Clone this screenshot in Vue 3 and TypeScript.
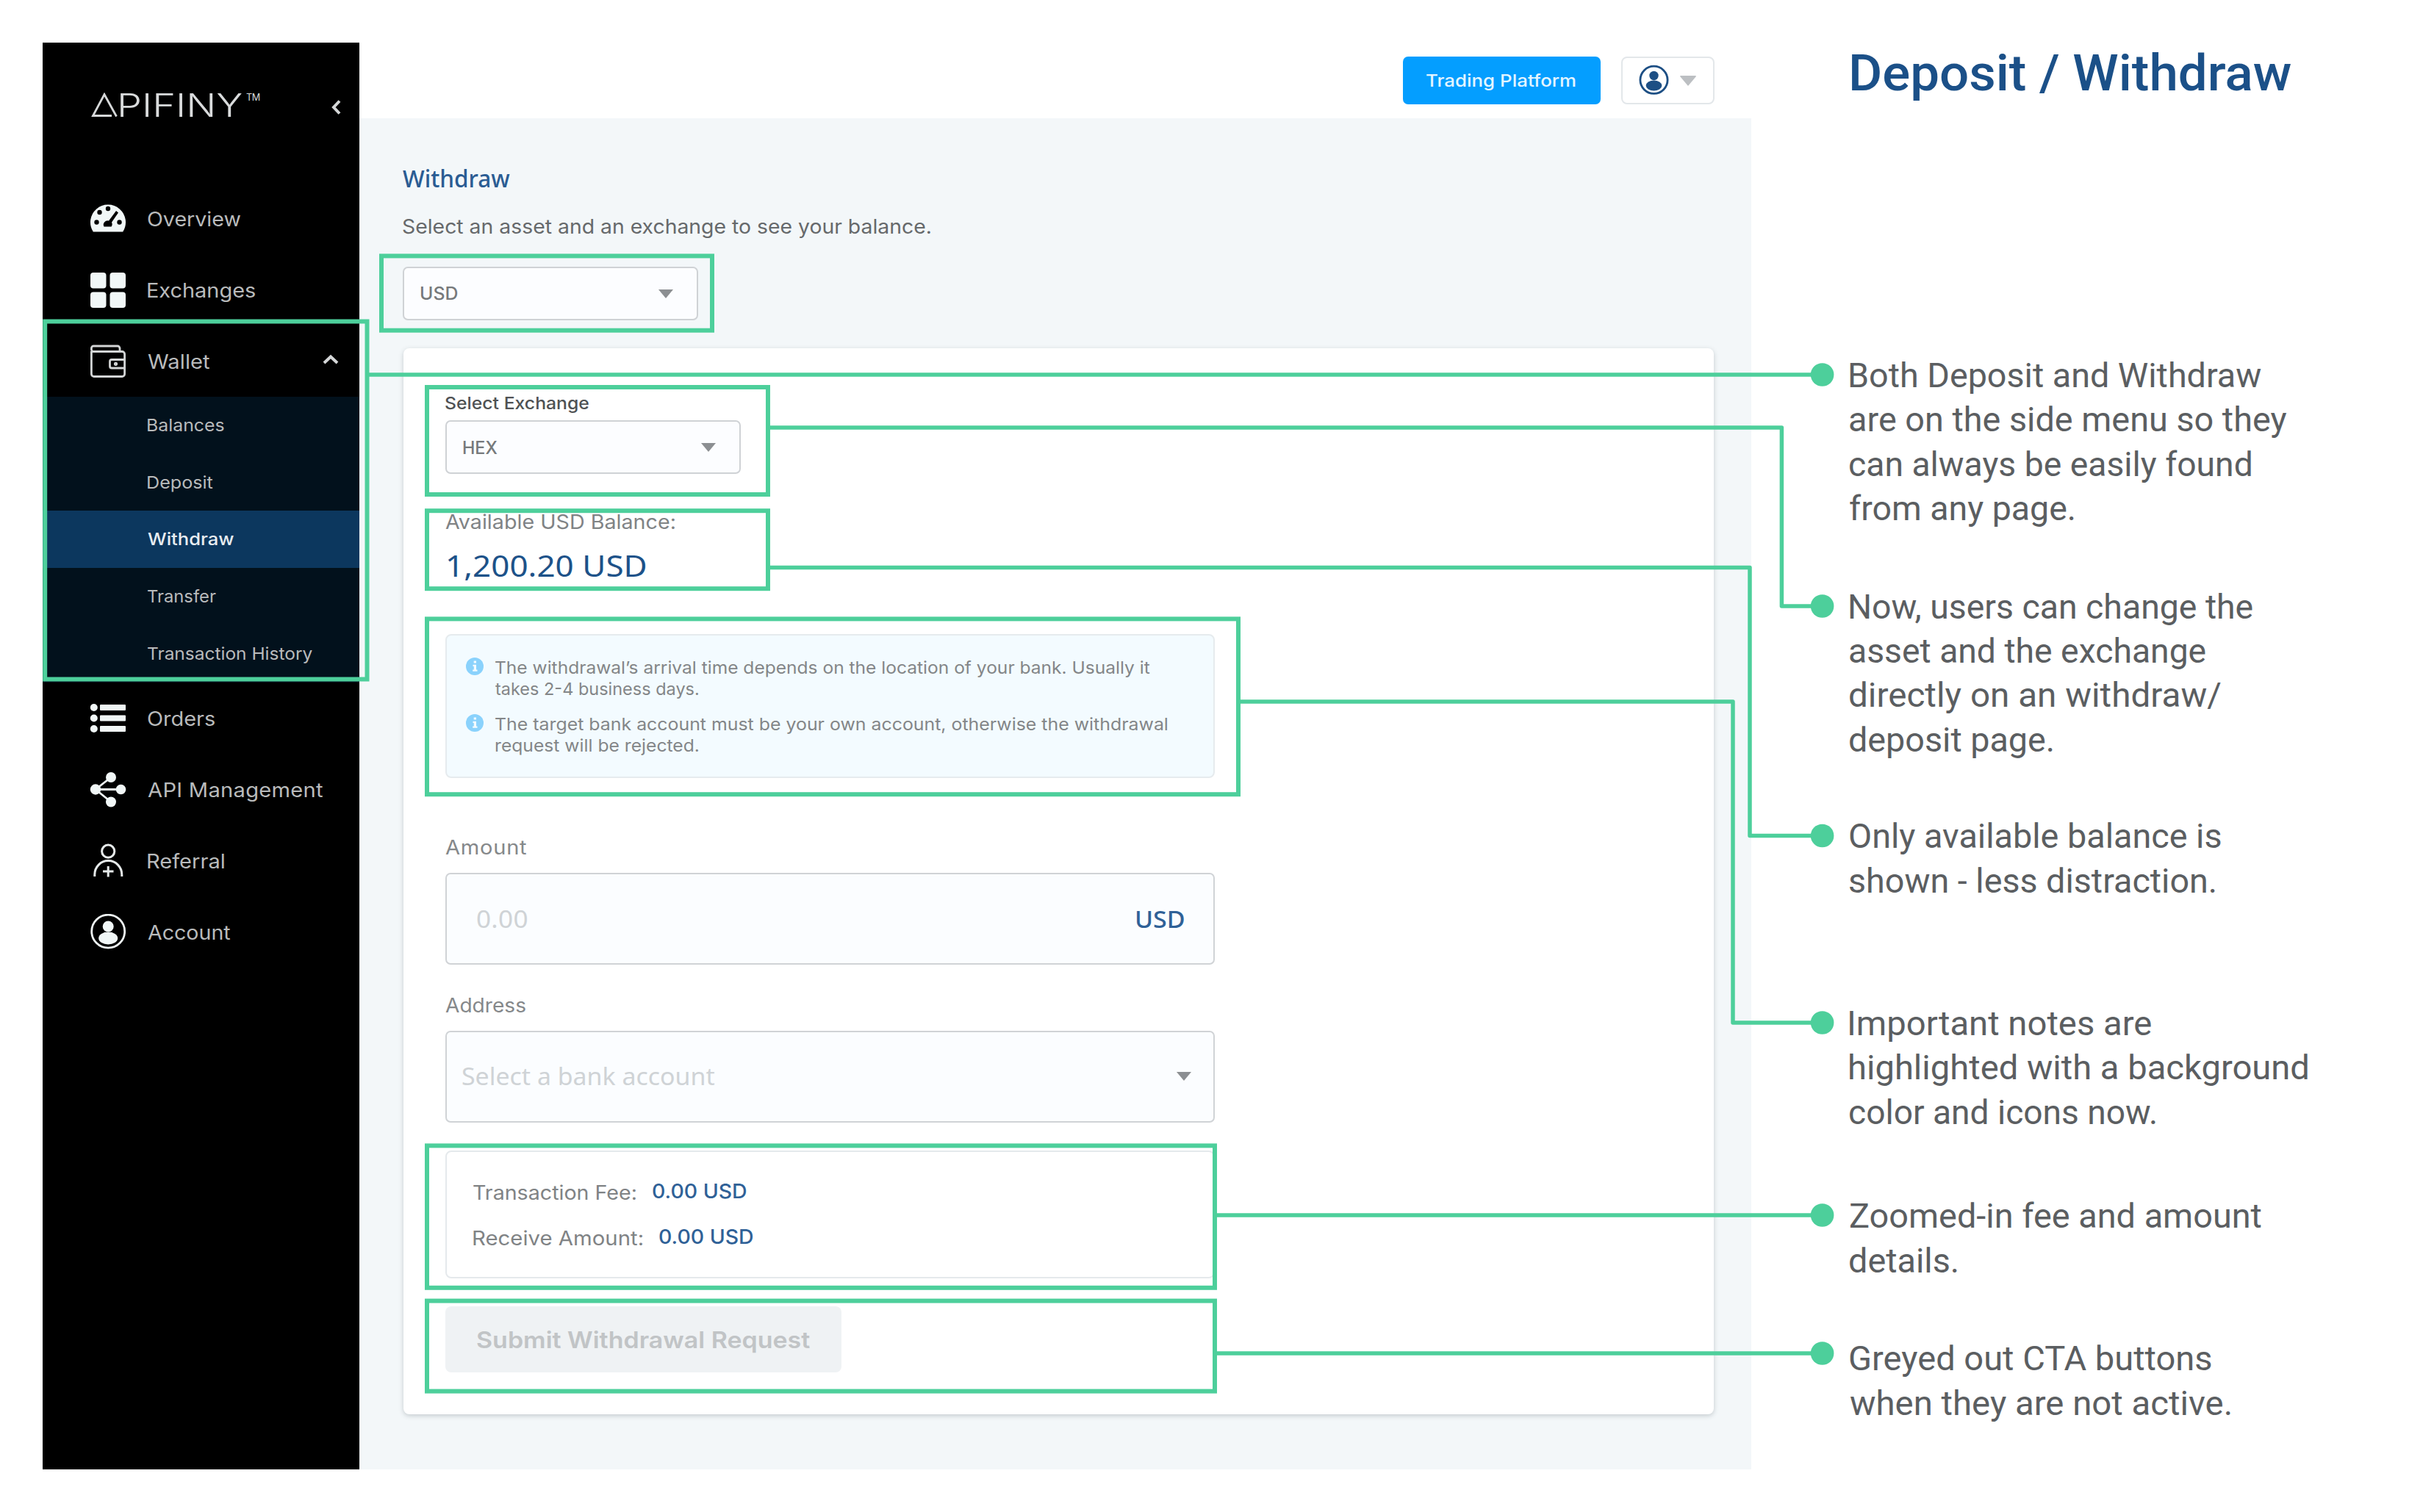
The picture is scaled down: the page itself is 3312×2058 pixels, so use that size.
<script setup lang="ts">
interface NavItem { icon: string; label: string; width: number }
interface SubItem { label: string; width: number; active?: boolean }
interface Line { text: string; width: number }
interface Note { id: string; lines: Line[] }

const topNav: NavItem[] = [
  { icon: 'gauge', label: 'Overview', width: 126 },
  { icon: 'grid', label: 'Exchanges', width: 146 },
  { icon: 'wallet', label: 'Wallet', width: 85 },
]
const walletNav: SubItem[] = [
  { label: 'Balances', width: 104 },
  { label: 'Deposit', width: 89 },
  { label: 'Withdraw', width: 117, active: true },
  { label: 'Transfer', width: 93 },
  { label: 'Transaction History', width: 224 },
]
const bottomNav: NavItem[] = [
  { icon: 'list', label: 'Orders', width: 91 },
  { icon: 'share', label: 'API Management', width: 239 },
  { icon: 'referral', label: 'Referral', width: 104 },
  { icon: 'account', label: 'Account', width: 113 },
]
const tips: Line[][] = [
  [
    { text: 'The withdrawal’s arrival time depends on the location of your bank. Usually it', width: 891 },
    { text: 'takes 2-4 business days.', width: 276 },
  ],
  [
    { text: 'The target bank account must be your own account, otherwise the withdrawal', width: 914 },
    { text: 'request will be rejected.', width: 276 },
  ],
]
const fees = [
  { label: 'Transaction Fee:', width: 221, value: '0.00 USD' },
  { label: 'Receive Amount:', width: 230, value: '0.00 USD' },
]
const notes: Note[] = [
  { id: 'menu', lines: [
    { text: 'Both Deposit and Withdraw', width: 560 },
    { text: 'are on the side menu so they', width: 594 },
    { text: 'can always be easily found', width: 546 },
    { text: 'from any page.', width: 305 },
  ] },
  { id: 'exchange', lines: [
    { text: 'Now, users can change the', width: 548 },
    { text: 'asset and the exchange', width: 484 },
    { text: 'directly on an withdraw/', width: 505 },
    { text: 'deposit page.', width: 276 },
  ] },
  { id: 'balance', lines: [
    { text: 'Only available balance is', width: 505 },
    { text: 'shown - less distraction.', width: 497 },
  ] },
  { id: 'important', lines: [
    { text: 'Important notes are', width: 410 },
    { text: 'highlighted with a background', width: 623 },
    { text: 'color and icons now.', width: 416 },
  ] },
  { id: 'fees', lines: [
    { text: 'Zoomed-in fee and amount', width: 560 },
    { text: 'details.', width: 146 },
  ] },
  { id: 'cta', lines: [
    { text: 'Greyed out CTA buttons', width: 492 },
    { text: 'when they are not active.', width: 518 },
  ] },
]

// Highlight frames: x, y, width, height of the stroke's centre line.
const frames = [
  [61.2, 437.5, 438.3, 487],
  [519, 348.4, 450, 101.3],
  [581, 527, 464, 146],
  [581, 695.2, 464, 106],
  [581, 842.4, 1104, 238.8],
  [581, 1559.4, 1072, 193.4],
  [581, 1770.6, 1072, 123],
]
const connectors = [
  'M502 510H2480',
  'M1047 582H2424.4V825H2480',
  'M1047 772.5H2381V1137.5H2480',
  'M1687 955H2358V1392H2480',
  'M1655 1654H2480',
  'M1655 1842H2480',
]
const dots = [510, 825, 1137.5, 1392, 1654, 1842]

// Widens a label so that its ink spans the given width from its box's left edge:
// the glyphs are stretched up to a limit, and tracking covers what is left.
const vFit = {
  mounted(el: HTMLElement, binding: { value: number; modifiers: Record<string, boolean> }) {
    const style = getComputedStyle(el)
    const ctx = document.createElement('canvas').getContext('2d')
    const text = (el.textContent ?? '').trim()
    if (!ctx || text.length < 2) return
    ctx.font = `${style.fontWeight} ${style.fontSize} ${style.fontFamily}`
    const m = ctx.measureText(text)
    const ink = m.actualBoundingBoxLeft + m.actualBoundingBoxRight
    const limit = binding.modifiers.wide ? 1.3 : 1.1
    const stretch = Math.min(limit, Math.max(0.94, binding.value / ink))
    const tracking = (binding.value / stretch - ink) / (text.length - 1)
    const advance = m.width + tracking * text.length
    el.style.letterSpacing = `${tracking.toFixed(3)}px`
    el.style.transform = `scaleX(${stretch.toFixed(4)})`
    el.style.marginLeft = `${(m.actualBoundingBoxLeft * stretch).toFixed(2)}px`
    el.style.marginRight = `${(advance * (stretch - 1) - tracking * stretch).toFixed(2)}px`
  },
}
</script>

<template>
  <div class="page">
    <div class="app">
      <aside class="sidebar">
        <div class="brand">
          <svg class="brand-mark" width="36" height="34" viewBox="0 0 36 34">
            <path d="M28 31.5H2.5L18 2.5L34.5 32.5" fill="none" stroke="#d6d8d9" stroke-width="2.8" />
          </svg>
          <span class="brand-name"><span v-fit.wide="166">PIFINY</span></span>
          <span class="brand-tm"><span v-fit="18">TM</span></span>
          <svg class="collapse" width="14" height="22" viewBox="0 0 14 22">
            <path d="M12 2.5L4 11L12 19.5" fill="none" stroke="#d5d7d8" stroke-width="4" />
          </svg>
        </div>

        <nav class="menu">
          <div v-for="item in topNav" :key="item.label" class="item">
            <svg v-if="item.icon === 'gauge'" class="icon" viewBox="0 0 50 50">
              <path d="M4.8 42.5A24 24 0 1 1 45.200 42.500Z" fill="#f1f7f7" />
              <g fill="#000">
                <circle cx="25" cy="11" r="3.2" /><circle cx="13.500" cy="16" r="3.200" />
                <circle cx="9.500" cy="29.500" r="3.200" /><circle cx="40.500" cy="29.500" r="3.200" />
                <path d="M19.500 35.500A6 5.500 0 0 1 26 27.500L36 14L39 16.500L30 29.500Q31.500 33 29.500 35.500Z" />
              </g>
            </svg>
            <svg v-else-if="item.icon === 'grid'" class="icon" viewBox="0 0 50 50" fill="#f1f7f7">
              <rect x="1" y="1" width="21.500" height="21.500" rx="4" /><rect x="27.500" y="1" width="21.500" height="21.500" rx="4" />
              <rect x="1" y="27.500" width="21.500" height="21.500" rx="4" /><rect x="27.500" y="27.500" width="21.500" height="21.500" rx="4" />
            </svg>
            <svg v-else class="icon" viewBox="0 0 50 50" fill="none" stroke="#d3d5d6" stroke-width="2.800">
              <path d="M2.400 11V42A3.500 3.500 0 0 0 6 45.500H44A3.500 3.500 0 0 0 47.600 42V15A3.500 3.500 0 0 0 44 11.500H5.500A3 3 0 0 1 2.400 8.500V7A3 3 0 0 1 5.500 4H38A3 3 0 0 1 41 7V11.500" />
              <path d="M47.600 22.500H30A2.500 2.500 0 0 0 27.500 25V31.500A2.500 2.500 0 0 0 30 34H47.600" />
              <circle cx="35.500" cy="28.300" r="1.200" />
            </svg>
            <span v-fit="item.width" class="label">{{ item.label }}</span>
            <svg v-if="item.icon === 'wallet'" class="expand" width="22" height="14" viewBox="0 0 22 14">
              <path d="M2 12L11 3.500L20 12" fill="none" stroke="#d5d7d8" stroke-width="4" />
            </svg>
          </div>

          <div class="submenu">
            <div v-for="sub in walletNav" :key="sub.label" class="sub" :class="{ active: sub.active }">
              <span v-fit="sub.width">{{ sub.label }}</span>
            </div>
          </div>

          <div v-for="item in bottomNav" :key="item.label" class="item">
            <svg v-if="item.icon === 'list'" class="icon" viewBox="0 0 50 50" fill="#f1f7f7">
              <circle cx="5.800" cy="10" r="5" /><circle cx="5.800" cy="24.500" r="5" /><circle cx="5.800" cy="39" r="5" />
              <rect x="14" y="6" width="35" height="8" rx="1" /><rect x="14" y="20.500" width="35" height="8" rx="1" />
              <rect x="14" y="35" width="35" height="8" rx="1" />
            </svg>
            <svg v-else-if="item.icon === 'share'" class="icon" viewBox="0 0 50 50" fill="#f1f7f7" stroke="#f1f7f7">
              <path d="M29 8L8 24.500H42M8 24.500L29 41.500" fill="none" stroke-width="2.800" />
              <g stroke="none">
                <circle cx="29" cy="8" r="7" /><circle cx="8" cy="24.500" r="7.200" />
                <circle cx="42.500" cy="24.500" r="6.800" /><circle cx="29" cy="41.500" r="7" />
              </g>
            </svg>
            <svg v-else-if="item.icon === 'referral'" class="icon" viewBox="0 0 50 50" fill="none" stroke="#e6eaea" stroke-width="3">
              <circle cx="25.200" cy="11.700" r="8.600" />
              <path d="M6.800 46V43.500A18.400 18.800 0 0 1 43.800 43.500V46M25.200 32V46.500M18 39H32.500" />
            </svg>
            <svg v-else class="icon" viewBox="0 0 50 50">
              <circle cx="25.200" cy="23.700" r="22.500" fill="none" stroke="#eef3f3" stroke-width="2.800" />
              <g fill="#f1f7f7"><circle cx="25.200" cy="17" r="7.500" /><ellipse cx="25.200" cy="33" rx="13" ry="8.500" /></g>
            </svg>
            <span v-fit="item.width" class="label">{{ item.label }}</span>
          </div>
        </nav>
      </aside>

      <main class="main">
        <header class="topbar">
          <button class="platform"><span v-fit="203">Trading Platform</span></button>
          <div class="user">
            <svg width="41" height="42" viewBox="0 0 41 42">
              <circle cx="20.500" cy="20.800" r="18.600" fill="none" stroke="#1d4f84" stroke-width="2.800" />
              <g fill="#1d4f84"><circle cx="20.500" cy="15" r="6.200" /><ellipse cx="20.500" cy="28.500" rx="10.800" ry="7" /></g>
            </svg>
            <svg class="user-caret" width="22" height="14" viewBox="0 0 22 14"><path d="M1 0H21Q22.500 0 21.500 1.500L11 14L.5 1.500Q-.5 0 1 0Z" fill="#bcbfc2" /></svg>
          </div>
        </header>

        <section class="content">
          <h2 class="heading"><span v-fit="146">Withdraw</span></h2>
          <p class="subtitle"><span v-fit="718">Select an asset and an exchange to see your balance.</span></p>
          <div class="select">
            <span v-fit="50">USD</span>
            <i class="caret"></i>
          </div>

          <div class="card">
            <div class="select-label"><span v-fit="195">Select Exchange</span></div>
            <div class="select">
              <span v-fit="47">HEX</span>
              <i class="caret"></i>
            </div>
            <div class="balance-label"><span v-fit="312">Available USD Balance:</span></div>
            <div class="amount-total"><span v-fit="269">1,200.20 USD</span></div>

            <div class="tips">
              <div v-for="(tip, i) in tips" :key="i" class="tip">
                <svg class="info" width="24" height="24" viewBox="0 0 24 24">
                  <circle cx="12" cy="12" r="12" fill="#8ad2fc" />
                  <path d="M10.700 4.500H14V7.500H10.700ZM9.500 9.800H14V16.500H15.500V18.800H9.200V16.500H10.800V12H9.500Z" fill="#f3fbff" />
                </svg>
                <div>
                  <div v-for="line in tip" :key="line.text" class="tip-line"><span v-fit="line.width">{{ line.text }}</span></div>
                </div>
              </div>
            </div>

            <div class="field-label amount-label"><span v-fit="111">Amount</span></div>
            <div class="field amount">
              <span v-fit="68" class="placeholder">0.00</span>
              <span v-fit="65" class="unit">USD</span>
            </div>
            <div class="field-label address-label"><span v-fit="109">Address</span></div>
            <div class="field address">
              <span v-fit="343" class="placeholder">Select a bank account</span>
              <i class="caret"></i>
            </div>

            <div class="fee-box">
              <div v-for="fee in fees" :key="fee.label" class="fee">
                <span v-fit="fee.width">{{ fee.label }}</span>
                <b><span v-fit="127">{{ fee.value }}</span></b>
              </div>
            </div>

            <button class="submit" disabled><span v-fit="453">Submit Withdrawal Request</span></button>
          </div>
        </section>
      </main>
    </div>

    <div class="notes">
      <h1><span v-fit="598">Deposit / Withdraw</span></h1>
      <p v-for="note in notes" :key="note.id" :class="`note-${note.id}`">
        <span v-for="line in note.lines" :key="line.text" v-fit="line.width">{{ line.text }}</span>
      </p>
    </div>

    <svg class="annotations" width="3312" height="2058" viewBox="0 0 3312 2058">
      <g fill="none" stroke="#4dcf9b">
        <rect v-for="(f, i) in frames" :key="i" :x="f[0]" :y="f[1]" :width="f[2]" :height="f[3]" stroke-width="6" />
        <path v-for="d in connectors" :key="d" :d="d" stroke-width="5.500" stroke-linejoin="round" />
      </g>
      <circle v-for="y in dots" :key="y" cx="2479.600" :cy="y" r="15.800" fill="#4dcf9b" />
    </svg>
  </div>
</template>

<style>
body { margin: 0; background: #fff; }
</style>

<style scoped>
* { box-sizing: border-box; }
h1, h2, p { margin: 0; font-weight: 400; }
button { border: 0; margin: 0; padding: 0; font: inherit; text-align: left; }
span, b { display: inline-block; white-space: nowrap; transform-origin: 0 50%; }
svg { display: block; flex: none; }

.page {
  position: relative;
  display: flex;
  width: 3312px;
  height: 2058px;
  padding: 58px 0 0 58px;
  overflow: hidden;
  background: #fff;
  font-family: Inter, "Noto Sans", sans-serif;
}
.app { display: flex; flex: none; width: 2325px; height: 1942px; }

.sidebar { flex: none; width: 431px; background: #000; color: #b9bbbc; }
.brand { display: flex; height: 191px; padding: 69px 0 0 66px; color: #d9dbdc; }
.brand-name { padding-left: 4px; font-size: 44px; line-height: 32px; font-weight: 300; }
.brand-tm { padding-left: 5px; font-size: 13.500px; line-height: 11px; }
.brand-mark { margin-top: -1px; }
.collapse { margin: 8px 25px 0 auto; }
.item { display: flex; align-items: center; height: 97px; padding-left: 64px; font-size: 26.500px; line-height: 36px; }
.icon { width: 50px; height: 50px; }
.item .icon { margin-right: 29px; }
.expand { margin: -6px 28px 0 auto; }
.submenu { height: 389px; background: #02111c; }
.sub { display: flex; align-items: center; height: 77.700px; padding-left: 143px; font-size: 23.500px; line-height: 32px; }
.sub.active { background: #0c375e; color: #e8edf1; font-weight: 500; }

.main { flex: 1; background: #f3f7f9; }
.topbar { display: flex; justify-content: flex-end; height: 103px; padding: 19px 50px 0 0; background: #fff; }
.platform { width: 269px; height: 65px; padding-left: 32px; border-radius: 7px; background: #049eff; color: #e4f5ff; font-size: 23.500px; font-weight: 500; }
.user { display: flex; align-items: center; width: 127px; height: 65px; margin-left: 28px; padding-left: 22px; border: 2px solid #e3e7ea; border-radius: 8px; }
.user svg:first-child { margin-top: -2px; }
.user-caret { margin: 1px 0 0 15px; }

.content { padding: 60px 50px 0 59px; }
.heading { color: #2a5c93; font: 500 32px/44px "Noto Sans", sans-serif; }
.subtitle { margin-top: 26px; color: #66696b; font-size: 27px; line-height: 36px; }
.select {
  display: flex;
  align-items: center;
  justify-content: space-between;
  width: 402px;
  height: 73px;
  padding: 0 32px 0 22px;
  border: 2px solid #cfd2d5;
  border-radius: 7px;
  background: #fcfdff;
  color: #76797b;
  font-size: 24px;
  font-weight: 500;
}
.content > .select { margin-top: 36px; }
.caret { width: 0; height: 0; border: 10.500px solid transparent; border-top: 12px solid #8c8f92; border-bottom: 0; }

.card {
  width: 1783px;
  height: 1451px;
  margin: 38px 0 0 1px;
  padding: 60px 0 0 57px;
  border-radius: 8px;
  background: #fff;
  box-shadow: 0 2px 6px rgba(60, 75, 85, .25);
}
.select-label { color: #4f5254; font-size: 23.500px; line-height: 30px; font-weight: 500; }
.card .select { margin-top: 8px; padding-top: 1px; }
.balance-label { margin-top: 48px; color: #808385; font-size: 27px; line-height: 36px; }
.amount-total { margin-top: 16px; padding-left: 3px; color: #1d5289; font: 400 40px/50px "Noto Sans", sans-serif; }
.tips { width: 1047px; height: 196px; margin-top: 68px; padding: 29px 0 0 26px; border: 2px solid #e6ebee; border-radius: 8px; background: #f3fbff; }
.tip { display: flex; }
.tip + .tip { margin-top: 19px; }
.info { margin: 1px 16px 0 0; }
.tip-line { height: 29px; color: #838688; font-size: 23.500px; line-height: 29px; }
.field-label { color: #85888a; font-size: 26.500px; line-height: 36px; }
.amount-label { margin-top: 76px; }
.address-label { margin-top: 37px; }
.field {
  display: flex;
  align-items: center;
  justify-content: space-between;
  width: 1047px;
  height: 125px;
  margin-top: 17px;
  border: 2px solid #d0d3d6;
  border-radius: 7px;
  background: #fbfdff;
  font: 400 32px/44px "Noto Sans", sans-serif;
}
.amount { padding: 0 38px 0 41px; }
.address { padding: 0 30px 2px 21px; }
.placeholder { color: #cfd3d6; }
.unit { color: #2f6197; font-weight: 500; }
.fee-box { width: 1047px; height: 174px; margin-top: 38px; padding: 38px 0 0 36px; border: 2px solid #e5e9ec; border-radius: 8px; }
.fee { display: flex; height: 36px; color: #808385; font-size: 27px; line-height: 36px; }
.fee + .fee { margin-top: 26px; }
.fee b { margin-top: -2px; padding-left: 21.500px; color: #2f6197; font-weight: 500; }
.submit { display: block; width: 539px; height: 90px; margin-top: 38px; padding-left: 43px; border-radius: 8px; background: #eff2f4; color: #c1c4c6; font-size: 31.500px; font-weight: 600; }

.notes { width: 740px; padding-left: 134px; color: #5b5e61; font-family: Roboto, "Noto Sans", sans-serif; }
.notes h1 { padding-left: 2px; color: #1b5088; font-size: 69px; line-height: 84px; font-weight: 500; }
.notes p { display: flex; flex-direction: column; align-items: flex-start; font-size: 45.500px; line-height: 60.400px; }
.note-menu { margin-top: 340px; }
.note-exchange { margin-top: 73px; }
.note-balance { margin-top: 71px; }
.note-important { margin-top: 134px; }
.note-fees { margin-top: 81px; }
.note-cta { margin-top: 73px; }
.notes p.note-menu { margin-top: 340px; }
.notes p.note-exchange { margin-top: 73px; }
.notes p.note-balance { margin-top: 71px; }
.notes p.note-important { margin-top: 134px; }
.notes p.note-fees { margin-top: 81px; }
.notes p.note-cta { margin-top: 73px; }

.annotations { position: absolute; top: 0; left: 0; pointer-events: none; }
</style>
